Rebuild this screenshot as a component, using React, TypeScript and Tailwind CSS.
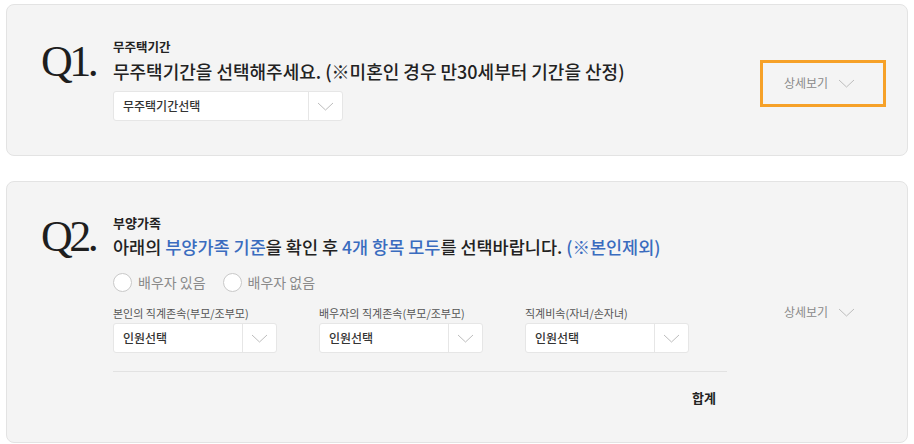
import React from 'react';

const KR = { fontFamily: '"Noto Sans CJK KR", "Noto Sans", sans-serif' };

const Chevron = ({ className = '' }: { className?: string }) => (
  <svg width="17" height="9" viewBox="0 0 17 9" className={className} fill="none">
    <polyline points="1,1 8.5,8 16,1" stroke="#bdbdbd" strokeWidth="1" />
  </svg>
);

const SelectBox = ({ label, width }: { label: string; width: string }) => (
  <div className={`flex h-[30px] ${width} items-stretch rounded-[3px] border border-[#e6e6e6] bg-white`}>
    <div className="flex flex-1 items-center pl-[9px] text-[12px] font-medium text-[#333]">{label}</div>
    <div className="flex w-[34px] items-center justify-center border-l border-[#e6e6e6]">
      <Chevron />
    </div>
  </div>
);

const Detail = ({ highlight }: { highlight?: boolean }) => (
  <div
    className={`flex h-[47px] w-[126px] items-center gap-[10px] pl-[21px] ${
      highlight ? 'border-[3px] border-[#f6a128]' : 'border-[3px] border-transparent'
    }`}
  >
    <span className="text-[12px] text-[#8a8a8a]">상세보기</span>
    <Chevron />
  </div>
);

const Radio = ({ label }: { label: string }) => (
  <label className="flex items-center gap-[6px]">
    <span className="h-[19px] w-[19px] rounded-full border border-[#c9c9c9] bg-white" />
    <span className="text-[14px] text-[#8a8a8a]">{label}</span>
  </label>
);

const QNum = ({ n }: { n: string }) => (
  <div
    className="w-[72px] shrink-0 text-[44px] leading-[44px] tracking-[-3.5px] text-[#1e1e1e]"
    style={{ fontFamily: '"Liberation Serif", serif' }}
  >
    {n}
  </div>
);

export default function App() {
  return (
    <div className="min-h-screen bg-white px-[6px] pt-[4px]" style={KR}>
      {/* Q1 */}
      <div className="flex h-[152px] items-stretch rounded-[8px] border border-[#e3e3e3] bg-[#f4f4f4] pl-[34px] pr-[21px]">
        <div className="flex flex-1 pt-[35px]">
          <QNum n="Q1." />
          <div className="flex flex-col">
            <div className="text-[12.5px] font-bold leading-[14px] text-[#222]">무주택기간</div>
            <div className="mt-[6px] text-[18px] font-medium leading-[22px] text-[#222]">
              무주택기간을 선택해주세요. (※미혼인 경우 만30세부터 기간을 산정)
            </div>
            <div className="mt-[9px]">
              <SelectBox label="무주택기간선택" width="w-[230px]" />
            </div>
          </div>
        </div>
        <div className="flex items-center pt-[6px]">
          <Detail highlight />
        </div>
      </div>

      {/* Q2 */}
      <div className="mt-[25px] flex h-[262px] items-stretch rounded-[8px] border border-[#e3e3e3] bg-[#f4f4f4] pl-[34px] pr-[21px]">
        <div className="flex flex-1 pt-[33px]">
          <QNum n="Q2." />
          <div className="flex w-[614px] flex-col">
            <div className="text-[13px] font-bold leading-[16px] text-[#222]">부양가족</div>
            <div className="mt-[5px] text-[17.5px] font-medium leading-[22px] text-[#222]">
              아래의 <span className="text-[#3a6cbf]">부양가족 기준</span>을 확인 후{' '}
              <span className="text-[#3a6cbf]">4개 항목 모두</span>를 선택바랍니다.{' '}
              <span className="text-[#3a6cbf]">(※본인제외)</span>
            </div>
            <div className="mt-[14px] flex gap-[17px]">
              <Radio label="배우자 있음" />
              <Radio label="배우자 없음" />
            </div>
            <div className="mt-[14px] flex gap-[42px]">
              {['본인의 직계존속(부모/조부모)', '배우자의 직계존속(부모/조부모)', '직계비속(자녀/손자녀)'].map((t) => (
                <div key={t} className="flex flex-col gap-[3px]">
                  <div className="text-[11px] leading-[13px] text-[#555]">{t}</div>
                  <SelectBox label="인원선택" width="w-[164px]" />
                </div>
              ))}
            </div>
            <div className="mt-[18px] border-t border-[#e2e2e2]" />
            <div className="mt-[16px] flex justify-end pr-[11px] text-[13px] font-bold text-[#222]">합계</div>
          </div>
        </div>
        <div className="flex items-center">
          <Detail />
        </div>
      </div>
    </div>
  );
}
